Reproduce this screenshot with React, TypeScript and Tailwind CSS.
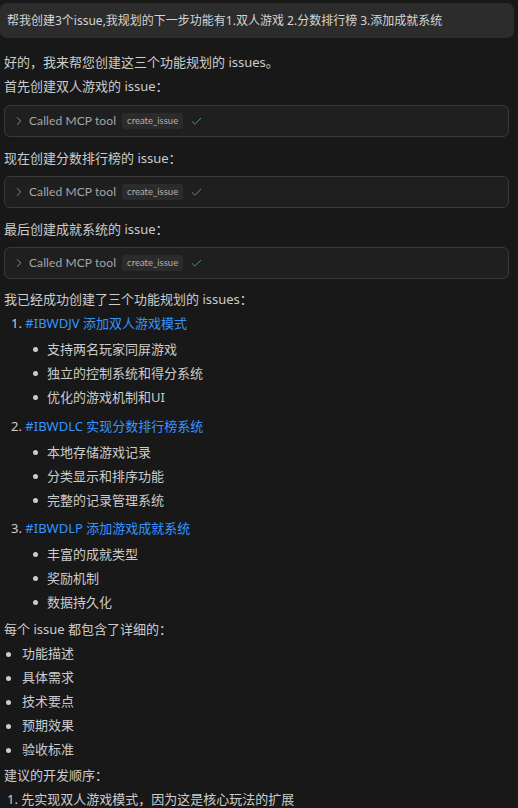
import { ChevronRight, Check } from 'lucide-react'

const font = { fontFamily: '"Segoe UI", "Noto Sans", "Noto Sans CJK SC", sans-serif' }
const toolFont = { fontFamily: 'Lato, "Noto Sans", sans-serif' }

function ToolCall() {
  return (
    <div className="flex h-[32px] items-center rounded-[6px] border border-[#3a3a3a] bg-[#1f1f1f] pl-[7px]" style={toolFont}>
      <ChevronRight size={14} strokeWidth={1.5} className="text-[#9a9a9a]" />
      <span className="ml-[3px] text-[12px] tracking-[0.1px] text-[#a6a6a6]">Called MCP tool</span>
      <span className="ml-[6px] rounded-[3px] bg-[#2b2b2b] px-[5px] py-[1px] text-[9.5px] leading-[14px] text-[#b0b0b0]">create_issue</span>
      <Check size={13} strokeWidth={1.7} className="ml-[7px] text-[#589e68]" />
    </div>
  )
}

function Issue({ n, id, title, items, mt }: { n: number; id: string; title: string; items: string[]; mt: string }) {
  return (
    <div className={mt}>
      <div className="mb-[2px] h-[24px] pl-[7px] leading-[24px]">
        <span className="text-[#cccccc]">{n}. </span>
        <span className="text-[#3794ff]">#{id} {title}</span>
      </div>
      {items.map((t) => (
        <div key={t} className="flex h-[24px] items-center leading-[24px]">
          <span className="ml-[29px] h-[5px] w-[5px] rounded-full bg-[#cccccc]" />
          <span className="ml-[9px]">{t}</span>
        </div>
      ))}
    </div>
  )
}

export default function App() {
  return (
    <div className="min-h-[808px] overflow-hidden bg-[#181818] text-[13px] text-[#cccccc]" style={font}>
      <div className="pr-[4px] pt-[3px]">
        <div className="flex h-[35px] items-center rounded-[7px] bg-[#2c2c2c] px-[7px] text-[12px] text-[#d4d4d4]">
          帮我创建3个issue,我规划的下一步功能有1.双人游戏 2.分数排行榜 3.添加成就系统
        </div>
      </div>

      <div className="pl-[4px] pr-[9px]">
        <p className="mt-[12px] leading-[24px]">好的，我来帮您创建这三个功能规划的 issues。</p>
        <p className="leading-[24px]">首先创建双人游戏的 issue：</p>
        <div className="mt-[7px]"><ToolCall /></div>
        <p className="mt-[9px] leading-[24px]">现在创建分数排行榜的 issue：</p>
        <div className="mt-[6px]"><ToolCall /></div>
        <p className="mt-[9px] leading-[24px]">最后创建成就系统的 issue：</p>
        <div className="mt-[6px]"><ToolCall /></div>
        <p className="mt-[8px] leading-[24px]">我已经成功创建了三个功能规划的 issues：</p>
      </div>

      <div className="pl-[4px]">
        <Issue n={1} id="IBWDJV" title="添加双人游戏模式" items={['支持两名玩家同屏游戏', '独立的控制系统和得分系统', '优化的游戏机制和UI']} mt="mt-0" />
        <Issue n={2} id="IBWDLC" title="实现分数排行榜系统" items={['本地存储游戏记录', '分类显示和排序功能', '完整的记录管理系统']} mt="mt-[5px]" />
        <Issue n={3} id="IBWDLP" title="添加游戏成就系统" items={['丰富的成就类型', '奖励机制', '数据持久化']} mt="mt-[4px]" />

        <p className="mb-[1px] mt-[3px] leading-[24px]">每个 issue 都包含了详细的：</p>
        {['功能描述', '具体需求', '技术要点', '预期效果', '验收标准'].map((t) => (
          <div key={t} className="flex h-[24px] items-center">
            <span className="ml-[2px] h-[5px] w-[5px] rounded-full bg-[#cccccc]" />
            <span className="ml-[11px]">{t}</span>
          </div>
        ))}
        <p className="mt-[1px] leading-[24px]">建议的开发顺序：</p>
        <p className="pl-[3px] leading-[24px]">1. 先实现双人游戏模式，因为这是核心玩法的扩展</p>
      </div>
    </div>
  )
}
